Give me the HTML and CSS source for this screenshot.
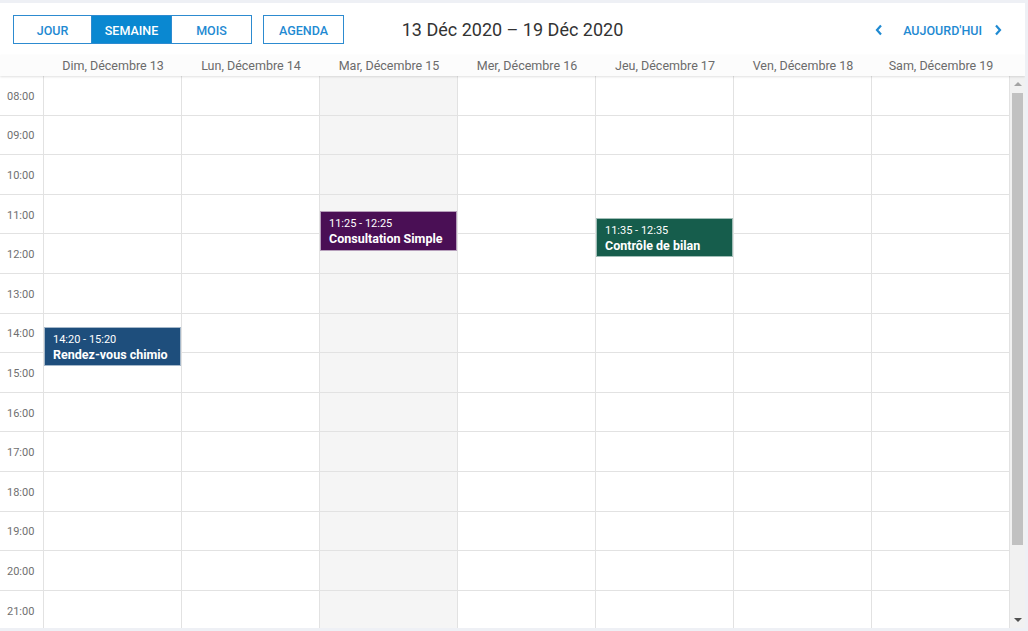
FILE: index.html
```html
<!DOCTYPE html>
<html lang="fr">
<head>
<meta charset="utf-8">
<title>Calendrier</title>
<link rel="stylesheet" href="styles.css">
</head>
<body>
<div class="app">
  <div class="toolbar">
    <div class="left">
      <div class="seg">
        <button class="btn">Jour</button>
        <button class="btn active">Semaine</button>
        <button class="btn">Mois</button>
      </div>
      <button class="btn single">Agenda</button>
    </div>
    <div class="title">13 Déc 2020 – 19 Déc 2020</div>
    <div class="right">
      <span class="chev"><svg width="8" height="12" viewBox="0 0 8 12"><path d="M6 1.5 L2 6 L6 10.5" fill="none" stroke="#1f8ad2" stroke-width="2.2"/></svg></span>
      <span class="today">Aujourd'hui</span>
      <span class="chev"><svg width="8" height="12" viewBox="0 0 8 12"><path d="M2 1.5 L6 6 L2 10.5" fill="none" stroke="#1f8ad2" stroke-width="2.2"/></svg></span>
    </div>
  </div>
  <div class="dayhead">
    <div class="gutter-h"></div>
    <div>Dim, Décembre 13</div>
    <div>Lun, Décembre 14</div>
    <div>Mar, Décembre 15</div>
    <div>Mer, Décembre 16</div>
    <div>Jeu, Décembre 17</div>
    <div>Ven, Décembre 18</div>
    <div>Sam, Décembre 19</div>
  </div>
  <div class="body">
    <div class="grid">
      <div class="gutter">
        <div class="cell">08:00</div><div class="cell">09:00</div><div class="cell">10:00</div><div class="cell">11:00</div><div class="cell">12:00</div><div class="cell">13:00</div><div class="cell">14:00</div><div class="cell">15:00</div><div class="cell">16:00</div><div class="cell">17:00</div><div class="cell">18:00</div><div class="cell">19:00</div><div class="cell">20:00</div><div class="cell">21:00</div>
      </div>
      <div class="col">
        <div class="cell"></div><div class="cell"></div><div class="cell"></div><div class="cell"></div><div class="cell"></div><div class="cell"></div><div class="cell"></div><div class="cell"></div><div class="cell"></div><div class="cell"></div><div class="cell"></div><div class="cell"></div><div class="cell"></div><div class="cell"></div>
        <div class="event blue" style="top: 250.8px;"><div class="time">14:20 - 15:20</div><div class="name">Rendez-vous chimio</div></div>
      </div>
      <div class="col">
        <div class="cell"></div><div class="cell"></div><div class="cell"></div><div class="cell"></div><div class="cell"></div><div class="cell"></div><div class="cell"></div><div class="cell"></div><div class="cell"></div><div class="cell"></div><div class="cell"></div><div class="cell"></div><div class="cell"></div><div class="cell"></div>
      </div>
      <div class="col today-col">
        <div class="cell"></div><div class="cell"></div><div class="cell"></div><div class="cell"></div><div class="cell"></div><div class="cell"></div><div class="cell"></div><div class="cell"></div><div class="cell"></div><div class="cell"></div><div class="cell"></div><div class="cell"></div><div class="cell"></div><div class="cell"></div>
        <div class="event purple" style="top: 135.3px;"><div class="time">11:25 - 12:25</div><div class="name">Consultation Simple</div></div>
      </div>
      <div class="col">
        <div class="cell"></div><div class="cell"></div><div class="cell"></div><div class="cell"></div><div class="cell"></div><div class="cell"></div><div class="cell"></div><div class="cell"></div><div class="cell"></div><div class="cell"></div><div class="cell"></div><div class="cell"></div><div class="cell"></div><div class="cell"></div>
      </div>
      <div class="col">
        <div class="cell"></div><div class="cell"></div><div class="cell"></div><div class="cell"></div><div class="cell"></div><div class="cell"></div><div class="cell"></div><div class="cell"></div><div class="cell"></div><div class="cell"></div><div class="cell"></div><div class="cell"></div><div class="cell"></div><div class="cell"></div>
        <div class="event green" style="top: 141.9px;"><div class="time">11:35 - 12:35</div><div class="name">Contrôle de bilan</div></div>
      </div>
      <div class="col">
        <div class="cell"></div><div class="cell"></div><div class="cell"></div><div class="cell"></div><div class="cell"></div><div class="cell"></div><div class="cell"></div><div class="cell"></div><div class="cell"></div><div class="cell"></div><div class="cell"></div><div class="cell"></div><div class="cell"></div><div class="cell"></div>
      </div>
      <div class="col">
        <div class="cell"></div><div class="cell"></div><div class="cell"></div><div class="cell"></div><div class="cell"></div><div class="cell"></div><div class="cell"></div><div class="cell"></div><div class="cell"></div><div class="cell"></div><div class="cell"></div><div class="cell"></div><div class="cell"></div><div class="cell"></div>
      </div>
    </div>
    <div class="scrollbar">
      <div class="arrow up"></div>
      <div class="track"><div class="thumb"></div></div>
      <div class="arrow down"></div>
    </div>
  </div>
</div>
</body>
</html>
```

FILE: styles.css
```css
* { box-sizing: border-box; }
html, body { margin: 0; padding: 0; }
body {
  background: #eef0f5;
  font-family: Roboto, "Liberation Sans", sans-serif;
  width: 1028px;
  height: 631px;
  overflow: hidden;
}
.app {
  margin-top: 3px;
  width: 1025px;
  height: 625px;
  background: #fff;
  display: flex;
  flex-direction: column;
  overflow: hidden;
}
.toolbar {
  height: 52px;
  flex: none;
  display: grid;
  grid-template-columns: 1fr auto 1fr;
  align-items: start;
  padding: 12px 13px 0 13px;
}
.left { display: flex; gap: 11px; }
.seg { display: flex; }
.btn {
  font-family: Roboto, "Liberation Sans", sans-serif;
  font-size: 12.5px;
  font-weight: 500;
  text-transform: uppercase;
  color: #1f8ad2;
  background: #fff;
  border: 1px solid #2d8bd0;
  height: 29px;
  padding: 1px 0 0;
  width: 80px;
  cursor: pointer;
}
.seg .btn:first-child { width: 79px; }
.seg .btn + .btn { border-left: none; }
.btn.active { background: #0a88d1; color: #fff; }
.btn.single { width: 81px; }
.title {
  font-size: 18px;
  color: #333;
  padding-top: 4px;
  line-height: 22px;
}
.right {
  justify-self: end;
  display: flex;
  align-items: center;
  height: 29px;
  padding-top: 1px;
  margin-right: 10px;
}
.chev { display: flex; align-items: center; }
.today {
  font-size: 12.5px;
  font-weight: 500;
  text-transform: uppercase;
  color: #1f8ad2;
  margin: 0 12px 0 20px;
}
.dayhead {
  flex: none;
  height: 21px;
  display: grid;
  grid-template-columns: 44px repeat(7, 1fr) 15px;
  background: #fcfcfc;
  box-shadow: 0 1px 2px rgba(0,0,0,0.12);
  position: relative;
  z-index: 2;
  font-size: 12.5px;
  color: #6b6b6b;
  line-height: 20px;
  padding-top: 1px;
}
.dayhead > div { text-align: center; white-space: nowrap; }
.body {
  flex: 1;
  display: flex;
  overflow: hidden;
}
.grid {
  width: 1010px;
  flex: none;
  display: grid;
  grid-template-columns: 44px repeat(7, 1fr);
  align-items: start;
}
.gutter, .col {
  display: flex;
  flex-direction: column;
  border-right: 1px solid #e2e2e2;
  position: relative;
}
.cell {
  height: 39.6px;
  flex: none;
  border-bottom: 1px solid #e2e2e2;
}
.gutter .cell {
  font-size: 11px;
  color: #707070;
  padding-left: 7px;
  padding-top: 2px;
  display: flex;
  align-items: center;
}
.today-col { background: #f5f5f5; }
.event {
  position: absolute;
  left: 0;
  right: 0;
  height: 39.6px;
  color: #fff;
  padding: 5px 8px 0;
  border: 1px solid rgba(255,255,255,0.6);
}
.event .time { font-size: 11px; line-height: 14px; }
.event .name { font-size: 12.5px; font-weight: 700; line-height: 16px; }
.blue { background: #1e4e7c; }
.purple { background: #4a0f55; }
.green { background: #165d4c; }
.scrollbar {
  width: 15px;
  flex: none;
  background: #f1f1f1;
  display: flex;
  flex-direction: column;
  align-items: center;
}
.arrow {
  width: 0; height: 0;
  border-left: 4px solid transparent;
  border-right: 4px solid transparent;
  margin: 6px 0;
  flex: none;
}
.arrow.up { border-bottom: 4px solid #a3a3a3; }
.arrow.down { border-top: 4px solid #505050; }
.track { flex: 1; width: 100%; padding: 1px 2px; }
.thumb { width: 100%; height: 452px; background: #c1c1c1; }
```
